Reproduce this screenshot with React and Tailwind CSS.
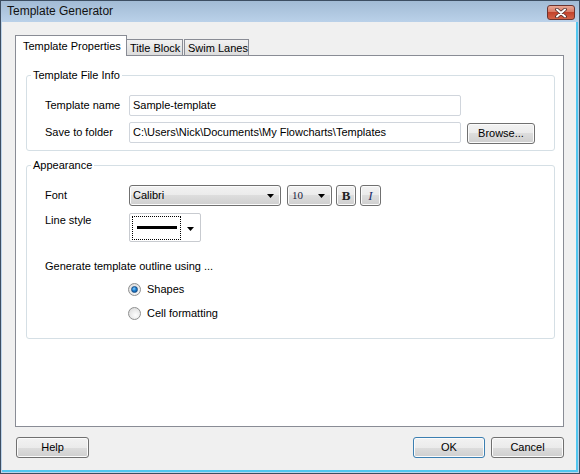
import React from "react";

const btn =
  "h-[21px] rounded-[3px] border border-[#707070] bg-[linear-gradient(#f2f2f2_0%,#ebebeb_50%,#dddddd_50%,#cfcfcf_100%)] shadow-[inset_0_0_0_1px_#fbfbfb] flex items-center justify-center";

function Arrow() {
  return (
    <svg width="7" height="4" viewBox="0 0 7 4">
      <path d="M0 0h7L3.5 4z" fill="#000" />
    </svg>
  );
}

function Radio({ checked }) {
  return (
    <div className="w-[13px] h-[13px] rounded-full border border-[#8e8f8f] bg-[radial-gradient(circle_at_60%_65%,#fdfdfd_0%,#e2e2e2_70%,#d4d4d4_100%)] flex items-center justify-center">
      {checked && (
        <div className="w-[7px] h-[7px] rounded-full border border-[#1c4f86] bg-[radial-gradient(circle_at_40%_35%,#8fd0ff_0%,#1a7fd0_45%,#0b4a8f_100%)]" />
      )}
    </div>
  );
}

function Tab({ label, active, className }) {
  if (active) {
    return (
      <div
        className={`relative z-10 h-[21px] -mb-px bg-white border border-b-0 border-[#898c95] flex items-center pl-[7px] whitespace-nowrap ${className}`}
      >
        {label}
      </div>
    );
  }
  return (
    <div
      className={`h-[16px] border border-b-0 border-[#898c95] bg-[linear-gradient(#f2f2f2,#dcdcdc)] flex items-center pl-[3px] pt-px whitespace-nowrap ${className}`}
    >
      {label}
    </div>
  );
}

export default function App() {
  return (
    <div className="w-[580px] h-[474px] flex flex-col border border-[#3d4e62] bg-[#bcd3ea] font-['Liberation_Sans',Arial,sans-serif] text-[11px] text-black leading-[13px] overflow-hidden">
      {/* title bar */}
      <div className="h-[21px] flex items-start justify-between pl-[6px] pr-[4px] bg-[linear-gradient(#a2bbd5,#bad1e9)]">
        <span className="text-[12px] leading-[21px] text-[#111]">Template Generator</span>
        <div className="mt-[4px] w-[28px] h-[15px] rounded-[3px] border border-[#6b3430] bg-[linear-gradient(#e9a896_0%,#d97a65_45%,#c3432c_50%,#d46348_100%)] flex items-center justify-center">
          <svg width="12" height="10" viewBox="0 0 12 10">
            <path d="M2 1.5L10 8.5M10 1.5L2 8.5" stroke="#4a2a28" strokeWidth="3.6" strokeLinecap="round" />
            <path d="M2 1.5L10 8.5M10 1.5L2 8.5" stroke="#fff" strokeWidth="2" strokeLinecap="round" />
          </svg>
        </div>
      </div>

      {/* client area */}
      <div className="flex-1 mx-px mb-px flex flex-col bg-[#f0f0f0] border-r-2 border-b-2 border-[#52c6ef] pt-[13px] pl-[13px] pr-[12px] pb-[12px]">
        <div className="h-[20px] flex items-end">
          <Tab label="Template Properties" active className="w-[112px]" />
          <Tab label="Title Block" className="w-[57px] -ml-px" />
          <Tab label="Swim Lanes" className="w-[65px] ml-px" />
        </div>

        <div className="h-[372px] bg-white border border-[#898c95] pt-[13px] pl-[10px] pr-[8px]">
          <fieldset className="border border-[#d5dfe5] rounded-[3px] pl-[18px] pb-[7px]">
            <legend className="ml-[-14px] px-[2px] leading-[13px]">Template File Info</legend>
            <div className="mt-[13px] flex items-center h-[21px]">
              <span className="w-[84px]">Template name</span>
              <div className="w-[332px] h-[21px] border border-[#d0d5dc] rounded-[2px] bg-white flex items-center pl-[3px]">
                Sample-template
              </div>
            </div>
            <div className="mt-[6px] flex items-start h-[21px]">
              <span className="w-[84px] leading-[21px]">Save to folder</span>
              <div className="w-[332px] h-[21px] border border-[#d0d5dc] rounded-[2px] bg-white flex items-center pl-[3px]">
                C:\Users\Nick\Documents\My Flowcharts\Templates
              </div>
              <div className={`${btn} w-[68px] ml-[6px] mt-px`}>Browse...</div>
            </div>
          </fieldset>

          <fieldset className="mt-[8px] border border-[#d5dfe5] rounded-[3px] pl-[18px] pb-[17px]">
            <legend className="ml-[-14px] px-[2px] leading-[13px]">Appearance</legend>
            <div className="mt-[13px] flex items-center h-[21px]">
              <span className="w-[84px]">Font</span>
              <div className={`${btn} w-[152px] !justify-between pl-[3px] pr-[6px]`}>
                <span>Calibri</span>
                <Arrow />
              </div>
              <div className={`${btn} w-[45px] ml-[6px] !justify-between pl-[4px] pr-[6px]`}>
                <span className="font-['Liberation_Serif',serif] text-[11px] text-[#1a1a40]">10</span>
                <Arrow />
              </div>
              <div className={`${btn} w-[20px] ml-[4px]`}>
                <span className="font-['Liberation_Serif',serif] font-bold text-[13px] text-[#222]">B</span>
              </div>
              <div className={`${btn} w-[21px] ml-[4px]`}>
                <span className="font-['Liberation_Serif',serif] italic text-[13px] text-[#1d2f6b]">I</span>
              </div>
            </div>
            <div className="mt-[7px] flex items-start">
              <span className="w-[84px] pt-px">Line style</span>
              <div className="w-[72px] h-[29px] border border-[#c8cbd0] rounded-[2px] bg-white flex items-center pl-[2px]">
                <div className="w-[49px] h-[24px] border border-dotted border-black flex items-center justify-center">
                  <div className="w-[40px] h-[3px] bg-black" />
                </div>
                <div className="flex-1 flex justify-center pt-[2px]">
                  <Arrow />
                </div>
              </div>
            </div>
            <div className="mt-[18px]">Generate template outline using ...</div>
            <div className="mt-[8px] flex items-center h-[16px] pl-[83px]">
              <Radio checked />
              <span className="ml-[6px]">Shapes</span>
            </div>
            <div className="mt-[8px] flex items-center h-[16px] pl-[83px]">
              <Radio />
              <span className="ml-[6px]">Cell formatting</span>
            </div>
          </fieldset>
        </div>

        <div className="mt-[10px] flex items-center">
          <div className={`${btn} w-[73px] ml-px`}>Help</div>
          <div className="flex-1" />
          <div className={`${btn} w-[72px] !border-[#3c7fb1] shadow-[inset_0_0_0_1px_#7fdcfb]`}>OK</div>
          <div className={`${btn} w-[73px] ml-[6px]`}>Cancel</div>
        </div>
      </div>
    </div>
  );
}
